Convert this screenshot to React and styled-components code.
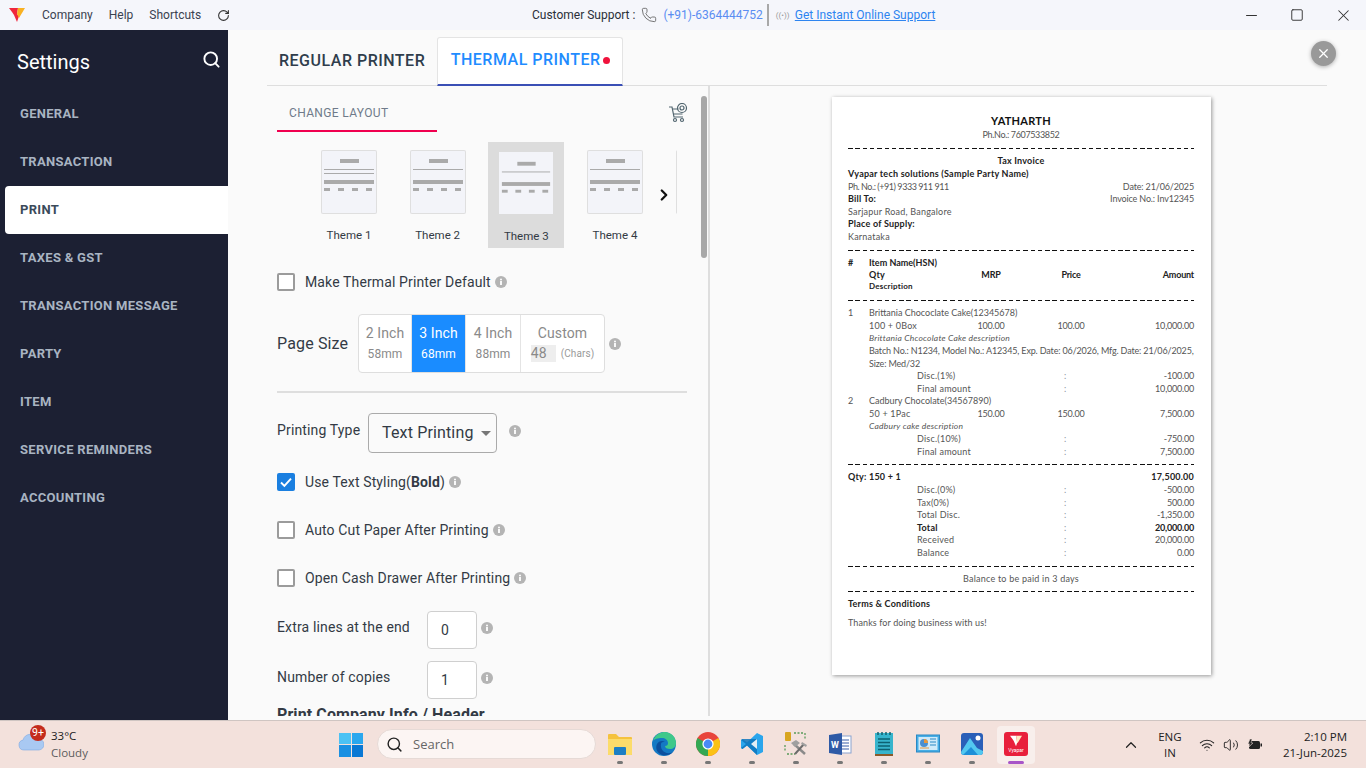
import React from 'react'
import styled, { createGlobalStyle } from 'styled-components'
import { Search, RotateCw, Minus, Square, X, ChevronRight, ChevronUp, Phone, Wifi, Volume2 } from 'lucide-react'

const GlobalStyle = createGlobalStyle`
    html, body { margin: 0; padding: 0; overflow: hidden; }
    body { font-family: Roboto, "Liberation Sans", sans-serif; background: #fafafa; }
    * { box-sizing: border-box; }
`

const navItems = ['GENERAL', 'TRANSACTION', 'PRINT', 'TAXES & GST', 'TRANSACTION MESSAGE', 'PARTY', 'ITEM', 'SERVICE REMINDERS', 'ACCOUNTING']

const Info = () => (
    <InfoIcon viewBox="0 0 12 12">
        <circle cx="6" cy="6" r="6" fill="#b4b4b4" />
        <rect x="5.1" y="5" width="1.8" height="4" fill="#fff" />
        <rect x="5.1" y="2.7" width="1.8" height="1.6" fill="#fff" />
    </InfoIcon>
)

const Thumb = ({ double }) => (
    <svg width="56" height="64" viewBox="0 0 56 64">
        <rect x="19" y="9" width="19" height="4" fill="#aaa" />
        <rect x="3" y="19" width="50" height="1" fill="#aaa" />
        {double && <rect x="3" y="23" width="50" height="1" fill="#aaa" />}
        <rect x="3" y="30" width="50" height="4" fill="#aaa" />
        {[3, 17, 31, 45].map(x => <rect key={x} x={x} y="38" width="6" height="3" fill="#aaa" />)}
    </svg>
)

const Check = ({ checked }) => (
    <CheckBox $checked={checked}>
        {checked && (
            <svg width="14" height="14" viewBox="0 0 14 14">
                <path d="M2 7.5l3.4 3.4L12 3.6" fill="none" stroke="#fff" strokeWidth="1.9" />
            </svg>
        )}
    </CheckBox>
)

const FolderIcon = () => (
    <svg width="26" height="24" viewBox="0 0 26 24">
        <path d="M1 3a1 1 0 011-1h7l3 3h12a1 1 0 011 1v16a1 1 0 01-1 1H2a1 1 0 01-1-1z" fill="#f5c23e" />
        <path d="M1 7h24v15a1 1 0 01-1 1H2a1 1 0 01-1-1z" fill="#fcdc6a" />
        <rect x="7" y="15" width="12" height="8" rx="1" fill="#1d7fc4" />
    </svg>
)

const EdgeIcon = () => (
    <svg width="26" height="26" viewBox="0 0 26 26">
        <circle cx="13" cy="13" r="12" fill="#1479c4" />
        <path d="M2 10C4 3 10 1 14 1c6 0 11 5 11 11 0 4-3 6-6 6-3 0-5-1-5-3 2 0 3-1 3-3 0-3-3-5-6-5-4 0-8 1-9 3z" fill="#3fc88a" />
        <path d="M10 13c-1 5 3 10 9 9 2 0 3-1 4-2-3 4-8 5-12 4-5-2-7-7-5-11 1-2 3-3 5-3 2 0 2 1 3 1-2 0-4 0-4 2z" fill="#0c4f9e" />
    </svg>
)

const ChromeIcon = () => (
    <svg width="24" height="24" viewBox="0 0 24 24">
        <circle cx="12" cy="12" r="12" fill="#e8453c" />
        <path d="M12 12L1.6 6A12 12 0 0012 24z" fill="#34a853" />
        <path d="M12 12V24A12 12 0 0022.4 6z" fill="#fbc116" />
        <circle cx="12" cy="12" r="5.6" fill="#fff" />
        <circle cx="12" cy="12" r="4.4" fill="#4a8af4" />
    </svg>
)

const VsCodeIcon = () => (
    <svg width="24" height="24" viewBox="0 0 24 24">
        <path d="M17 1l6 3v16l-6 3L7 13.500 2.500 17 1 16v-8l1.500-1L7 10.500z" fill="#2aa5ec" />
        <path d="M17 1v22L7 13.500 2.500 17 1 16l5-4-5-4 1.500-1L17 7z" fill="#0e75bd" opacity=".85" />
        <path d="M17 7v10l-6-5z" fill="#fafafa" opacity=".9" />
    </svg>
)

const ToolIcon = () => (
    <svg width="26" height="26" viewBox="0 0 26 26">
        <rect x="2" y="1" width="6" height="9" rx="1" fill="#d8a520" />
        <path d="M11 2h9M22 2v6M2 14v7M4 23h8" stroke="#5a9a5a" strokeWidth="1.300" strokeDasharray="2 1.500" fill="none" />
        <path d="M11 13l11 10" stroke="#8a8a8a" strokeWidth="2.400" />
        <path d="M21 13L12 23" stroke="#6c6c6c" strokeWidth="2" />
        <path d="M8 12l5-3 4 3-5 4zM19 11l5 3-1 2-5-3z" fill="#a0a0a0" />
    </svg>
)

const WordIcon = () => (
    <svg width="24" height="24" viewBox="0 0 24 24">
        <rect x="9" y="4" width="14" height="17" fill="#fff" stroke="#8aa3cf" />
        <path d="M14 8h7M14 11h7M14 14h7M14 17h7" stroke="#3a5ea8" />
        <path d="M1 3l13-2v22L1 21z" fill="#2e5aa6" />
        <text x="3" y="16" fontSize="9" fontWeight="700" fill="#fff" fontFamily="Roboto">W</text>
    </svg>
)

const NotesIcon = () => (
    <svg width="20" height="26" viewBox="0 0 20 26">
        <rect x="1" y="2" width="18" height="21" fill="#37b4cc" />
        <rect x="1" y="23" width="18" height="2" fill="#8a5a2a" />
        <path d="M4 1v3M8 1v3M12 1v3M16 1v3" stroke="#14606e" strokeWidth="1.500" />
        <path d="M4 8h12M4 11.500h12M4 15h12M4 18.500h12" stroke="#0d6172" strokeWidth="1.500" />
    </svg>
)

const PanelIcon = () => (
    <svg width="24" height="20" viewBox="0 0 24 20">
        <rect x="0.500" y="1" width="23" height="17" fill="#46aee6" stroke="#2b88c4" />
        <rect x="2.500" y="3" width="19" height="13" fill="#cfeafa" />
        <circle cx="8" cy="9" r="4" fill="#4a8fd0" />
        <path d="M8 9V5a4 4 0 014 4z" fill="#e8973a" />
        <path d="M14 5h6M14 8h6M14 11h6" stroke="#2b88c4" strokeWidth="1.200" />
        <path d="M4 14h9" stroke="#e8973a" />
    </svg>
)

const PhotosIcon = () => (
    <svg width="24" height="24" viewBox="0 0 24 24">
        <rect x="1" y="1" width="22" height="22" rx="3" fill="#2a5fb8" />
        <circle cx="18" cy="6" r="2.500" fill="#fff" />
        <path d="M1 20L10 6l7 10 6 3v1a3 3 0 01-3 3H4a3 3 0 01-3-3z" fill="#52c8f0" />
        <path d="M3 23l8-8 7 8z" fill="#1e90d8" />
    </svg>
)

const VyaparLogo = ({ size = 16, light }) => (
    <svg width={size} height={size} viewBox="0 0 16 16">
        <path d="M0 1h9L8 7l2 2-2 6-3-7-2-3z" fill={light ? '#fff' : '#f0263c'} />
        <path d="M9 1h7l-6 10-2-4z" fill={light ? '#ffe9c4' : '#f9b122'} />
    </svg>
)

const taskIcons = [FolderIcon, EdgeIcon, ChromeIcon, VsCodeIcon, ToolIcon, WordIcon, NotesIcon, PanelIcon, PhotosIcon]

const App = () => {
    return (
        <Page>
            <GlobalStyle />
            <TopBar>
                <TopLeft>
                    <VyaparLogo />
                    <MenuLink>Company</MenuLink>
                    <MenuLink>Help</MenuLink>
                    <MenuLink>Shortcuts</MenuLink>
                    <RotateCw size={13} color="#333" />
                </TopLeft>
                <Support>
                    <span>Customer Support :</span>
                    <PhoneSlot><Phone size={16} color="#555" strokeWidth={1.2} /></PhoneSlot>
                    <SupportNumber>(+91)-6364444752</SupportNumber>
                    <SupportDivider />
                    <SignalDots>((•))</SignalDots>
                    <SupportLink>Get Instant Online Support</SupportLink>
                </Support>
                <WindowControls>
                    <WinButton><Minus size={17} color="#333" strokeWidth={1.6} /></WinButton>
                    <WinButton><Square size={14} color="#333" strokeWidth={1.6} /></WinButton>
                    <WinButton><X size={19} color="#333" strokeWidth={1.3} /></WinButton>
                </WindowControls>
            </TopBar>

            <Body>
                <Sidebar>
                    <SidebarHead>
                        <SidebarTitle>Settings</SidebarTitle>
                        <Search size={19} color="#fff" strokeWidth={2.4} />
                    </SidebarHead>
                    {navItems.map(item => (
                        <NavItem key={item} $active={item === 'PRINT'}>{item}</NavItem>
                    ))}
                </Sidebar>

                <Main>
                    <CloseButton><X size={15} color="#fff" strokeWidth={2} /></CloseButton>
                    <Tabs>
                        <PrinterTab>REGULAR PRINTER</PrinterTab>
                        <PrinterTab $active>THERMAL PRINTER<RedDot /></PrinterTab>
                    </Tabs>
                    <Columns>
                        <SettingsPanel>
                            <ScrollThumb />
                            <LayoutHead>
                                <LayoutTab>CHANGE LAYOUT</LayoutTab>
                                <CartIcon viewBox="0 0 20 20" fill="none" stroke="#50646e" strokeWidth="1.200">
                                    <path d="M1 4h3l2 10h9" />
                                    <path d="M4.500 6h6M5.500 11h9" />
                                    <circle cx="7" cy="17" r="1.500" />
                                    <circle cx="14" cy="17" r="1.500" />
                                    <circle cx="14" cy="5" r="4.500" />
                                    <circle cx="14" cy="5" r="2" />
                                </CartIcon>
                            </LayoutHead>
                            <ThemeStrip>
                                {[1, 2, 3, 4, 5].map(n => (
                                    <ThemeItem key={n} $active={n === 3}>
                                        <ThemeCard $active={n === 3}><Thumb double={n === 1} /></ThemeCard>
                                        {n < 5 && <ThemeName $active={n === 3}>Theme {n}</ThemeName>}
                                    </ThemeItem>
                                ))}
                                <ThemeArrow><ChevronRight size={18} color="#111" strokeWidth={3} /></ThemeArrow>
                            </ThemeStrip>

                            <CheckRow $top={25}>
                                <Check />
                                <CheckLabel>Make Thermal Printer Default</CheckLabel>
                                <Info />
                            </CheckRow>

                            <PageSizeRow>
                                <PageSizeLabel>Page Size</PageSizeLabel>
                                <SizeGroup>
                                    <SizeCell $w={53}>2 Inch<small>58mm</small></SizeCell>
                                    <SizeCell $w={54} $active>3 Inch<small>68mm</small></SizeCell>
                                    <SizeCell $w={55}>4 Inch<small>88mm</small></SizeCell>
                                    <SizeCell $w={83}>
                                        Custom
                                        <CustomRow><CustomValue>48</CustomValue><CharsNote>(Chars)</CharsNote></CustomRow>
                                    </SizeCell>
                                </SizeGroup>
                                <Info />
                            </PageSizeRow>

                            <Divider />

                            <TypeRow>
                                <FieldLabel>Printing Type</FieldLabel>
                                <TypeSelect>Text Printing<Caret /></TypeSelect>
                                <Info />
                            </TypeRow>

                            <CheckRow $top={20}>
                                <Check checked />
                                <CheckLabel>Use Text Styling(<b>Bold</b>)</CheckLabel>
                                <Info />
                            </CheckRow>
                            <CheckRow $top={30}>
                                <Check />
                                <CheckLabel>Auto Cut Paper After Printing</CheckLabel>
                                <Info />
                            </CheckRow>
                            <CheckRow $top={30}>
                                <Check />
                                <CheckLabel>Open Cash Drawer After Printing</CheckLabel>
                                <Info />
                            </CheckRow>

                            <NumberRow $top={24}>
                                <NumberLabel>Extra lines at the end</NumberLabel>
                                <NumberBox>0</NumberBox>
                                <Info />
                            </NumberRow>
                            <NumberRow $top={12}>
                                <NumberLabel>Number of copies</NumberLabel>
                                <NumberBox>1</NumberBox>
                                <Info />
                            </NumberRow>
                            <HeaderTitle>Print Company Info / Header</HeaderTitle>
                        </SettingsPanel>

                        <Preview>
                            <Paper>
                                <CompanyName>YATHARTH</CompanyName>
                                <CompanyPhone>Ph.No.: 7607533852</CompanyPhone>
                                <Dash />
                                <Line $center $bold>Tax Invoice</Line>
                                <Line $bold>Vyapar tech solutions (Sample Party Name)</Line>
                                <SplitLine><Digits $ls={-0.45}>Ph. No.: (+91) 9333 911 911</Digits><Digits>Date: 21/06/2025</Digits></SplitLine>
                                <SplitLine><b>Bill To:</b><Digits>Invoice No.: Inv12345</Digits></SplitLine>
                                <Line>Sarjapur Road, Bangalore</Line>
                                <Line $bold>Place of Supply:</Line>
                                <Line>Karnataka</Line>
                                <Dash />
                                <ItemHead $bold><span>#</span><span>Item Name(HSN)</span></ItemHead>
                                <ItemGrid $bold><i /><span>Qty</span><span>MRP</span><span>Price</span><span>Amount</span></ItemGrid>
                                <Indented $bold $tight>Description</Indented>
                                <Dash />

                                <ItemHead><span>1</span><span>Brittania Chococlate Cake(12345678)</span></ItemHead>
                                <ItemGrid><i /><span>100 + 0Box</span><span>100.00</span><span>100.00</span><span>10,000.00</span></ItemGrid>
                                <Indented $italic>Brittania Chcocolate Cake description</Indented>
                                <BatchLine>Batch No.: N1234, Model No.: A12345, Exp. Date: 06/2026, Mfg. Date: 21/06/2025, Size: Med/32</BatchLine>
                                <Summary><span>Disc.(1%)</span><span>:</span><span>-100.00</span></Summary>
                                <Summary><span>Final amount</span><span>:</span><span>10,000.00</span></Summary>

                                <ItemHead><span>2</span><span>Cadbury Chocolate(34567890)</span></ItemHead>
                                <ItemGrid><i /><span>50 + 1Pac</span><span>150.00</span><span>150.00</span><span>7,500.00</span></ItemGrid>
                                <Indented $italic>Cadbury cake description</Indented>
                                <Summary><span>Disc.(10%)</span><span>:</span><span>-750.00</span></Summary>
                                <Summary><span>Final amount</span><span>:</span><span>7,500.00</span></Summary>
                                <Dash />

                                <SplitLine $bold><span>Qty: 150 + 1</span><span>17,500.00</span></SplitLine>
                                <Summary><span>Disc.(0%)</span><span>:</span><span>-500.00</span></Summary>
                                <Summary><span>Tax(0%)</span><span>:</span><span>500.00</span></Summary>
                                <Summary><span>Total Disc.</span><span>:</span><span>-1,350.00</span></Summary>
                                <Summary $bold><span>Total</span><span>:</span><span>20,000.00</span></Summary>
                                <Summary><span>Received</span><span>:</span><span>20,000.00</span></Summary>
                                <Summary><span>Balance</span><span>:</span><span>0.00</span></Summary>
                                <Dash />
                                <Line $center>Balance to be paid in 3 days</Line>
                                <Dash />
                                <Line $bold>Terms &amp; Conditions</Line>
                                <ThanksLine>Thanks for doing business with us!</ThanksLine>
                            </Paper>
                        </Preview>
                    </Columns>
                </Main>
            </Body>

            <Taskbar>
                <Weather>
                    <CloudIcon viewBox="0 0 26 18">
                        <path d="M6 17a5 5 0 01-1-9.900A8 8 0 0120 6a5.500 5.500 0 011 11z" fill="#a9c9f2" stroke="#7ea9e2" strokeWidth=".6" />
                    </CloudIcon>
                    <Badge>9+</Badge>
                    <WeatherText><span>33°C</span><small>Cloudy</small></WeatherText>
                </Weather>
                <StartIcon>
                    <StartPane $c="#4cc2f4" /><StartPane $c="#2aa7ee" /><StartPane $c="#1a90e2" /><StartPane $c="#0a78d4" />
                </StartIcon>
                <SearchBox><Search size={17} color="#222" strokeWidth={2} /><span>Search</span></SearchBox>
                <TaskIcons>
                    {taskIcons.map((Icon, i) => (
                        <TaskSlot key={i}><Icon /><TaskDot /></TaskSlot>
                    ))}
                    <ActiveSlot>
                        <VyaparTile><VyaparLogo size={12} light /><em>Vyapar</em></VyaparTile>
                        <TaskDot $active />
                    </ActiveSlot>
                </TaskIcons>
                <Tray>
                    <ChevronUp size={18} color="#222" strokeWidth={1.6} />
                    <LangBlock>ENG<br />IN</LangBlock>
                    <Wifi size={16} color="#222" strokeWidth={1.6} />
                    <Volume2 size={16} color="#222" strokeWidth={1.4} />
                    <svg width="16" height="12" viewBox="0 0 16 12">
                        <rect x="2" y="2" width="11" height="8" rx="1.500" fill="#222" />
                        <rect x="13.500" y="4.500" width="1.500" height="3" fill="#222" />
                        <path d="M3 0L1 5h2L2 8l4-4H4l1-4z" fill="#222" stroke="#f3e1dc" strokeWidth=".5" />
                    </svg>
                    <Clock>2:10 PM<br />21-Jun-2025</Clock>
                </Tray>
            </Taskbar>
        </Page>
    )
}

export default App

const Page = styled.div`
    width: 1366px;
    height: 768px;
    display: flex;
    flex-direction: column;
    overflow: hidden;
`

const TopBar = styled.header`
    height: 30px;
    flex-shrink: 0;
    display: flex;
    align-items: center;
    background: #f5f6fb;
    font-size: 12px;
    color: #3a4250;
`

const TopLeft = styled.div`
    width: 532px;
    padding-left: 9px;
    display: flex;
    align-items: center;
`

const MenuLink = styled.span`
    margin-left: 16px;
    &:first-of-type { margin-left: 17px; }
    &:last-of-type { margin-right: 16px; }
`

const Support = styled.div`
    display: flex;
    align-items: center;
    color: #2a2f38;
`

const PhoneSlot = styled.span`
    display: flex;
    margin-left: 6px;
`

const SupportNumber = styled.span`
    color: #5a8df2;
    margin-left: 6px;
`

const SupportDivider = styled.div`
    width: 2px;
    height: 22px;
    background: #a8a8a8;
    margin: 0 7px 0 4px;
`

const SignalDots = styled.span`
    font-size: 8px;
    color: #999;
    width: 19px;
`

const SupportLink = styled.a`
    color: #2d84f0;
    text-decoration: underline;
`

const WindowControls = styled.div`
    margin-left: auto;
    display: flex;
`

const WinButton = styled.div`
    width: 46px;
    display: flex;
    align-items: center;
    justify-content: center;
`

const Body = styled.div`
    flex: 1;
    display: flex;
    min-height: 0;
`

const Sidebar = styled.nav`
    width: 228px;
    flex-shrink: 0;
    background: #1c2033;
`

const SidebarHead = styled.div`
    height: 60px;
    padding: 0 7px 1px 17px;
    display: flex;
    align-items: center;
    justify-content: space-between;
`

const SidebarTitle = styled.div`
    font-size: 20px;
    padding-top: 4px;
    color: #fff;
`

const NavItem = styled.div`
    height: 48px;
    margin-left: 5px;
    padding: 0 0 2px 15px;
    display: flex;
    align-items: center;
    font-size: 13px;
    font-weight: 700;
    letter-spacing: 0.3px;
    color: ${p => (p.$active ? '#3b4a5a' : '#a9b4c2')};
    background: ${p => (p.$active ? '#fff' : 'transparent')};
    border-radius: ${p => (p.$active ? '4px 0 0 4px' : '0')};
`

const Main = styled.main`
    flex: 1;
    position: relative;
    padding: 0 39px;
    background: #fafafa;
`

const CloseButton = styled.div`
    position: absolute;
    top: 11px;
    right: 30px;
    width: 25px;
    height: 25px;
    border-radius: 50%;
    background: #999;
    box-shadow: 0 1px 4px rgba(0, 0, 0, 0.3);
    display: flex;
    align-items: center;
    justify-content: center;
`

const Tabs = styled.div`
    height: 56px;
    display: flex;
    align-items: flex-end;
    border-bottom: 1px solid #dedede;
`

const PrinterTab = styled.div`
    height: 49px;
    margin-bottom: -1px;
    display: flex;
    align-items: center;
    font-size: 16px;
    font-weight: 500;
    letter-spacing: 0.5px;
    padding: ${p => (p.$active ? '0 12.500px 3px' : '0 12px 3px')};
    color: ${p => (p.$active ? '#1f8cff' : '#2f3d4c')};
    background: ${p => (p.$active ? '#fff' : 'transparent')};
    border: ${p => (p.$active ? '1px solid #e4e4e4' : 'none')};
    border-bottom: ${p => (p.$active ? '2px solid #3a4fb5' : 'none')};
    border-radius: 3px 3px 0 0;
`

const RedDot = styled.span`
    width: 7px;
    height: 7px;
    border-radius: 50%;
    background: #f0123c;
    margin-left: 2px;
    margin-top: 2px;
`

const Columns = styled.div`
    display: flex;
`

const SettingsPanel = styled.section`
    position: relative;
    width: 443px;
    height: 630px;
    flex-shrink: 0;
    padding-left: 10px;
    overflow: hidden;
    border-right: 2px solid #dedede;
`

const ScrollThumb = styled.div`
    position: absolute;
    top: 10px;
    right: 1px;
    width: 6px;
    height: 162px;
    border-radius: 3px;
    background: #a8a8a8;
`

const LayoutHead = styled.div`
    width: 411px;
    display: flex;
    align-items: center;
    justify-content: space-between;
`

const CartIcon = styled.svg`
    width: 20px;
    height: 20px;
    margin-top: 8px;
`

const LayoutTab = styled.div`
    width: 160px;
    height: 46px;
    padding: 20px 0 0 12px;
    border-bottom: 2px solid #f0004f;
    font-size: 12px;
    line-height: 15px;
    letter-spacing: 0.35px;
    color: #6f7a8a;
`

const ThemeStrip = styled.div`
    position: relative;
    width: 400px;
    height: 106px;
    margin-top: 10px;
    padding-left: 34px;
    display: flex;
    gap: 12.67px;
    overflow: hidden;
`

const ThemeItem = styled.div`
    width: 76px;
    flex-shrink: 0;
    display: flex;
    flex-direction: column;
    align-items: center;
    padding-top: ${p => (p.$active ? '10px' : '8px')};
    background: ${p => (p.$active ? '#dcdcdc' : 'transparent')};
`

const ThemeCard = styled.div`
    width: ${p => (p.$active ? '54px' : '56px')};
    height: ${p => (p.$active ? '62px' : '64px')};
    overflow: hidden;
    display: flex;
    justify-content: center;
    background: #f3f4f9;
    border-radius: ${p => (p.$active ? '0' : '2px')};
    box-shadow: ${p => (p.$active ? 'none' : 'inset 0 0 0 1px #dfdfdf')};
`

const ThemeName = styled.div`
    margin-top: ${p => (p.$active ? '15px' : '14px')};
    font-size: 11.500px;
    line-height: 14px;
    color: #333a45;
`

const ThemeArrow = styled.div`
    position: absolute;
    left: 378px;
    top: 44px;
    display: flex;
`

const CheckRow = styled.div`
    height: 18px;
    margin-top: ${p => p.$top}px;
    display: flex;
    align-items: center;
`

const CheckBox = styled.div`
    width: 18px;
    height: 18px;
    flex-shrink: 0;
    display: flex;
    align-items: center;
    justify-content: center;
    border-radius: 2px;
    background: ${p => (p.$checked ? '#1a7fe0' : '#fff')};
    border: ${p => (p.$checked ? 'none' : '2px solid #9b9b9b')};
`

const CheckLabel = styled.span`
    margin-left: 10px;
    font-size: 14px;
    letter-spacing: 0.13px;
    color: #333a45;
`

const InfoIcon = styled.svg`
    width: 12px;
    height: 12px;
    flex-shrink: 0;
    margin-left: 4px;
`

const PageSizeRow = styled.div`
    height: 59px;
    margin-top: 23px;
    display: flex;
    align-items: center;
`

const PageSizeLabel = styled.span`
    width: 81px;
    font-size: 16px;
    letter-spacing: 0.15px;
    color: #333a45;
`

const SizeGroup = styled.div`
    display: flex;
    height: 59px;
    background: #fff;
    border: 1px solid #dedede;
    border-radius: 4px;
    overflow: hidden;
`

const SizeCell = styled.div`
    width: ${p => p.$w}px;
    display: flex;
    flex-direction: column;
    align-items: center;
    padding-top: 10px;
    font-size: 14px;
    line-height: 17px;
    letter-spacing: 0.1px;
    color: ${p => (p.$active ? '#fff' : '#8a8a8a')};
    background: ${p => (p.$active ? '#1a8cff' : 'transparent')};
    border-right: 1px solid #e4e4e4;
    &:last-child { border-right: none; }
    small {
        font-size: 12px;
        line-height: 14px;
        margin-top: 5px;
    }
`

const CustomRow = styled.div`
    display: flex;
    align-items: center;
    margin-top: 3px;
`

const CustomValue = styled.span`
    width: 25px;
    height: 17px;
    background: #eeeeee;
    font-size: 14px;
    line-height: 17px;
`

const CharsNote = styled.span`
    font-size: 10px;
    margin-left: 5px;
    color: #999;
`

const Divider = styled.div`
    width: 410px;
    height: 2px;
    margin-top: 18px;
    background: #dedede;
`

const TypeRow = styled.div`
    height: 40px;
    margin-top: 20px;
    display: flex;
    align-items: center;
    svg { margin: -4px 0 0 12px; }
`

const FieldLabel = styled.span`
    width: 91px;
    font-size: 14px;
    letter-spacing: 0.15px;
    color: #333a45;
    margin-top: -6px;
`

const TypeSelect = styled.div`
    width: 129px;
    height: 40px;
    padding: 0 0 2px 13px;
    display: flex;
    align-items: center;
    font-size: 16px;
    letter-spacing: 0.15px;
    color: #333a45;
    background: #fafafa;
    border: 1px solid #aaa;
    border-radius: 4px;
`

const Caret = styled.span`
    margin-left: 7px;
    margin-top: 2px;
    border-left: 5px solid transparent;
    border-right: 5px solid transparent;
    border-top: 5px solid #777;
`

const NumberRow = styled.div`
    height: 38px;
    margin-top: ${p => p.$top}px;
    display: flex;
    align-items: center;
    svg { margin: -4px 0 0 4px; }
`

const NumberLabel = styled.span`
    width: 150px;
    font-size: 14px;
    letter-spacing: 0.15px;
    color: #333a45;
    margin-top: -7px;
`

const NumberBox = styled.div`
    width: 50px;
    height: 38px;
    padding: 0 0 1px 13px;
    display: flex;
    align-items: center;
    font-size: 14px;
    color: #333a45;
    background: #fff;
    border: 1px solid #cfcfcf;
    border-radius: 4px;
`

const HeaderTitle = styled.div`
    margin-top: 7px;
    font-size: 16px;
    line-height: 18px;
    font-weight: 700;
    letter-spacing: 0.1px;
    color: #333a45;
`

const Preview = styled.section`
    padding: 11px 0 0 122px;
`

const Paper = styled.article`
    width: 379px;
    height: 578px;
    padding: 17.400px 17px 0 16px;
    background: #fff;
    box-shadow: 1px 1px 4px rgba(0, 0, 0, 0.4);
    font-family: Lato, "Noto Sans", sans-serif;
    font-size: 9px;
    color: #555;
    letter-spacing: 0.22px;
    b { font-weight: 700; color: #222; }
`

const CompanyName = styled.div`
    height: 14px;
    line-height: 14px;
    text-align: center;
    font-size: 11px;
    font-weight: 700;
    letter-spacing: 0.25px;
    color: #111;
`

const CompanyPhone = styled.div`
    height: 14px;
    line-height: 14px;
    text-align: center;
    letter-spacing: -0.35px;
`

const Digits = styled.span`
    letter-spacing: ${p => p.$ls ?? -0.15}px;
`

const Dash = styled.div`
    height: 1px;
    margin: 6px 0;
    background: repeating-linear-gradient(90deg, #111 0 4.500px, transparent 4.500px 7.300px);
`

const Line = styled.div`
    height: 12.6px;
    line-height: 12.6px;
    white-space: nowrap;
    text-align: ${p => (p.$center ? 'center' : 'left')};
    font-weight: ${p => (p.$bold ? 700 : 400)};
    color: ${p => (p.$bold ? '#222' : '#555')};
`

const SplitLine = styled(Line)`
    display: flex;
    justify-content: space-between;
`

const ItemHead = styled(Line)`
    display: grid;
    grid-template-columns: 21px 1fr;
    letter-spacing: 0;
`

const ItemGrid = styled(Line)`
    display: grid;
    grid-template-columns: 21px 82px 80px 80px 1fr;
    span:nth-child(3), span:nth-child(4) { text-align: center; letter-spacing: -0.2px; }
    span:nth-child(5) { text-align: right; letter-spacing: -0.2px; }
`

const Indented = styled(Line)`
    padding-left: 21px;
    font-style: ${p => (p.$italic ? 'italic' : 'normal')};
    font-size: ${p => (p.$italic ? '8.500px' : p.$tight ? '8px' : '9px')};
    line-height: ${p => (p.$tight ? '9.6px' : p.$italic ? '10.6px' : '12.6px')};
`

const BatchLine = styled.div`
    padding-left: 21px;
    line-height: 12.6px;
    letter-spacing: -0.15px;
    margin-right: -5px;
`

const Summary = styled(Line)`
    display: grid;
    grid-template-columns: 69px 147px 4px 1fr;
    &::before { content: ''; }
    span:nth-child(1) { grid-column: 2; }
    span:nth-child(2) { font-weight: 400; color: #8a93a0; }
    span:nth-child(3) { text-align: right; letter-spacing: -0.2px; }
`

const ThanksLine = styled(Line)`
    margin-top: 6px;
    letter-spacing: 0.1px;
`

const Taskbar = styled.footer`
    height: 48px;
    flex-shrink: 0;
    display: flex;
    align-items: center;
    background: #f3e1dc;
    border-top: 1px solid #cfc5c2;
`

const Weather = styled.div`
    position: relative;
    width: 339px;
    padding-left: 18px;
    display: flex;
    align-items: center;
    flex-shrink: 0;
`

const CloudIcon = styled.svg`
    width: 26px;
    height: 18px;
    margin-top: -6px;
`

const Badge = styled.div`
    position: absolute;
    left: 30px;
    top: -2px;
    width: 16px;
    height: 16px;
    border-radius: 50%;
    background: #c42b1c;
    color: #fff;
    font-size: 10.500px;
    line-height: 16px;
    text-align: center;
`

const WeatherText = styled.div`
    margin-left: 7px;
    padding-bottom: 2px;
    display: flex;
    flex-direction: column;
    font-family: "Open Sans", "Noto Sans", sans-serif;
    font-size: 11.500px;
    line-height: 17px;
    color: #222;
    small { font-size: 11.500px; color: #5c5c5c; }
`

const StartIcon = styled.div`
    width: 24px;
    height: 24px;
    display: grid;
    grid-template-columns: 1fr 1fr;
    gap: 1px;
    flex-shrink: 0;
`

const StartPane = styled.span`
    background: ${p => p.$c};
`

const SearchBox = styled.div`
    width: 219px;
    height: 30px;
    margin: 0 0 1px 14px;
    padding-left: 8px;
    display: flex;
    align-items: center;
    gap: 10px;
    background: #fcf5f3;
    border: 1px solid #e6dad6;
    border-radius: 16px;
    font-family: "Open Sans", "Noto Sans", sans-serif;
    font-size: 13px;
    color: #666;
`

const TaskIcons = styled.div`
    display: flex;
    margin-left: 2px;
    height: 100%;
    align-items: center;
`

const TaskSlot = styled.div`
    position: relative;
    width: 44px;
    height: 38px;
    display: flex;
    align-items: center;
    justify-content: center;
    padding-bottom: 2px;
`

const ActiveSlot = styled(TaskSlot)`
    background: #f8efec;
    border-radius: 4px;
    width: 38px;
    margin-left: 3px;
`

const TaskDot = styled.span`
    position: absolute;
    left: 50%;
    bottom: 0;
    transform: translateX(-50%);
    width: ${p => (p.$active ? '16px' : '6px')};
    height: 3px;
    border-radius: 2px;
    background: ${p => (p.$active ? '#a855c8' : '#777')};
`

const VyaparTile = styled.div`
    width: 24px;
    height: 24px;
    border-radius: 3px;
    background: #e8203c;
    display: flex;
    flex-direction: column;
    align-items: center;
    padding-top: 3px;
    em {
        font-family: Roboto, sans-serif;
        font-style: normal;
        font-size: 5px;
        line-height: 7px;
        color: #fff;
    }
`

const Tray = styled.div`
    margin-left: auto;
    padding-right: 19px;
    display: flex;
    align-items: center;
    gap: 8px;
    font-family: "Open Sans", "Noto Sans", sans-serif;
    color: #222;
`

const LangBlock = styled.div`
    width: 38px;
    margin: 0 2px 0 3px;
    text-align: center;
    font-size: 11.500px;
    line-height: 16px;
`

const Clock = styled.div`
    margin-left: 12px;
    text-align: right;
    font-size: 11.500px;
    line-height: 16px;
`
